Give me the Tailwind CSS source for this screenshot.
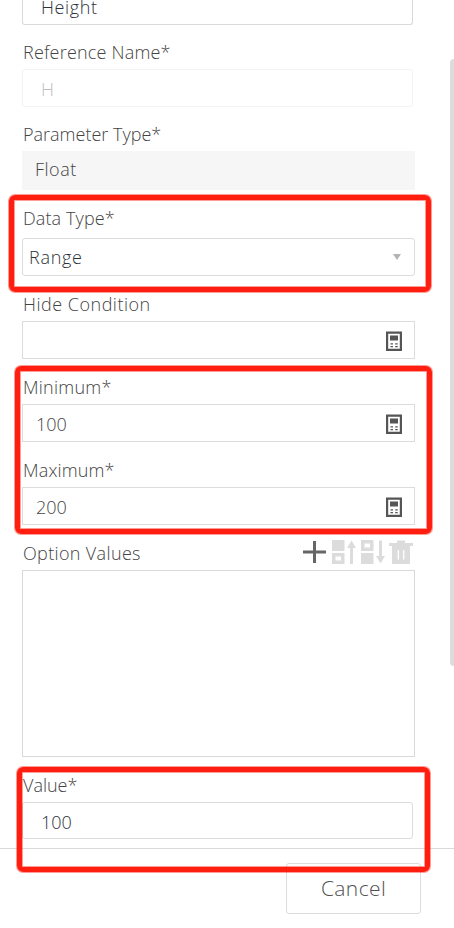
<!DOCTYPE html>
<html lang="en">

<head>
    <meta charset="UTF-8">
    <meta name="viewport" content="width=device-width, initial-scale=1.0">
    <title>Edit Parameter</title>
    <script src="https://cdn.jsdelivr.net/npm/@tailwindcss/browser@4"></script>
</head>

<body class="relative h-[928px] w-[454px] overflow-hidden bg-white font-['Open_Sans','Noto_Sans',sans-serif] text-[18px] font-light text-[#444]">
    <svg class="hidden">
        <symbol id="calc" viewBox="0 0 16 20">
            <path fill="#555" fill-rule="evenodd" d="M0 .5h16v19.500H0zM2.200 2.700v15.100h11.600V2.700z" />
            <path fill="#555" d="M4 4.500h8v5H4zM4.500 12.300h2.500v1.200H4.500zM9.200 12.300h2.500v1.200H9.200zM4.500 15h2.500v1.200H4.500zM9.200 15h2.500v1.200H9.200z" />
        </symbol>
    </svg>

    <!-- Form -->
    <form class="flex h-[848px] flex-col pl-[22px]">
        <div class="h-[25px] w-[391px] rounded-b-[3px] border border-t-0 border-[#d9d9d9] pl-[18px] leading-[15px] tracking-[0.6px] text-[#2d323a]">Height</div>

        <label class="mt-[11px] h-[33px] pl-px leading-[33px] tracking-[0.2px]">Reference Name*</label>
        <div class="h-[38px] w-[391px] rounded-[3px] border border-[#f3f3f3] pl-[18px] leading-[39px] text-[#c0c0c0]">H</div>

        <label class="mt-[11px] h-[33px] pl-px leading-[33px]">Parameter Type*</label>
        <div class="h-[39px] w-[393px] bg-[#f6f6f6] pl-[13px] leading-[37px] tracking-[0.5px]">Float</div>

        <label class="mt-[15px] h-[33px] pl-px leading-[27px] tracking-[0.1px]">Data Type*</label>
        <div class="flex h-[38px] w-[393px] items-center justify-between rounded-[3px] border border-[#dcdcdc] pl-[6px] pr-[13px] text-[#2d323a]">
            <span class="tracking-[0.7px]">Range</span>
            <svg class="h-[6px] w-[8px]" viewBox="0 0 8 6"><path d="M0 0h8L4 6z" fill="#b3b3b3" /></svg>
        </div>

        <label class="mt-[12px] h-[33px] pl-px leading-[33px] tracking-[0.5px]">Hide Condition</label>
        <div class="flex h-[38px] w-[393px] items-center justify-end border border-[#dcdcdc] pt-[2px] pr-[12px]">
            <svg class="h-[20px] w-[16px]"><use href="#calc" /></svg>
        </div>

        <label class="mt-[12px] h-[33px] pl-px leading-[33px] tracking-[0.25px]">Minimum*</label>
        <div class="flex h-[38px] w-[393px] items-center justify-between border border-[#dcdcdc] pt-[2px] pl-[13px] pr-[12px]">
            <span>100</span>
            <svg class="h-[20px] w-[16px]"><use href="#calc" /></svg>
        </div>

        <label class="mt-[12px] h-[33px] pl-px leading-[33px] tracking-[0.15px]">Maximum*</label>
        <div class="flex h-[38px] w-[393px] items-center justify-between border border-[#dcdcdc] pt-[2px] pl-[13px] pr-[12px]">
            <span>200</span>
            <svg class="h-[20px] w-[16px]"><use href="#calc" /></svg>
        </div>

        <div class="mt-[12px] flex h-[33px] w-[391px] items-center justify-between">
            <label class="pl-px tracking-[0.35px]">Option Values</label>
            <div class="flex items-center pb-[3px] text-[#dcdcdc]">
                <svg class="mr-[6px] h-[24px] w-[23px]" viewBox="0 0 23 24"><path d="M0 12h23M11.500 1v22" stroke="#666" stroke-width="3" /></svg>
                <svg class="mr-[5px] h-[24px] w-[24px]" viewBox="0 0 24 24" fill="currentColor">
                    <path d="M0 0h12.500v11H0z" />
                    <path fill-rule="evenodd" d="M0 13h12.500v11H0zM3.500 16.500v4h5.500v-4z" />
                    <path d="M19.500 0.500l4.500 7.500h-3V24h-3V8H15z" />
                </svg>
                <svg class="mr-[4px] h-[24px] w-[24px]" viewBox="0 0 24 24" fill="currentColor">
                    <path fill-rule="evenodd" d="M0 0h12.500v11H0zM3.500 3.500v4h5.500v-4z" />
                    <path d="M0 13h12.500v11H0z" />
                    <path d="M19.500 23.500L24 16h-3V0.500h-3V16H15z" />
                </svg>
                <svg class="h-[24px] w-[24px]" viewBox="0 0 24 24">
                    <path fill="currentColor" d="M8 0.500h8V3h8v3h-3v18H3V6H0V3h8z" />
                    <path d="M9.300 10v9.500M14.700 10v9.500" stroke="#fff" stroke-width="1.300" />
                </svg>
            </div>
        </div>
        <div class="h-[187px] w-[393px] border border-[#d9d9d9]"></div>

        <label class="mt-[12px] h-[33px] pl-px leading-[33px]">Value*</label>
        <div class="h-[37px] w-[391px] rounded-[3px] border border-[#dcdcdc] pl-[18px] leading-[39px] text-[#2d323a]">100</div>
    </form>

    <!-- Footer -->
    <div class="flex h-[80px] justify-end border-t border-[#d9d9d9] pt-[14px] pr-[33px]">
        <button type="button" class="h-[51px] w-[135px] rounded-[3px] border border-[#dcdcdc] pt-px text-[21px] tracking-[0.4px] text-[#505050]">Cancel</button>
    </div>

    <!-- Scrollbar -->
    <div class="absolute top-[59px] right-0 h-[607px] w-[4px] rounded-l-[4px] bg-[#dcdcdc]"></div>

    <!-- Highlights -->
    <div class="absolute top-[195px] left-[9px] h-[97px] w-[422px] rounded-[6px] border-5 border-[#ff1e10] shadow-[0_0_0_1px_#ff1e1070,inset_0_0_0_1px_#ff1e1070]"></div>
    <div class="absolute top-[366px] left-[15px] h-[168px] w-[417px] rounded-[6px] border-5 border-[#ff1e10] shadow-[0_0_0_1px_#ff1e1070,inset_0_0_0_1px_#ff1e1070]"></div>
    <div class="absolute top-[767px] left-[17px] h-[105px] w-[413px] rounded-[6px] border-5 border-[#ff1e10] shadow-[0_0_0_1px_#ff1e1070,inset_0_0_0_1px_#ff1e1070]"></div>
</body>

</html>
